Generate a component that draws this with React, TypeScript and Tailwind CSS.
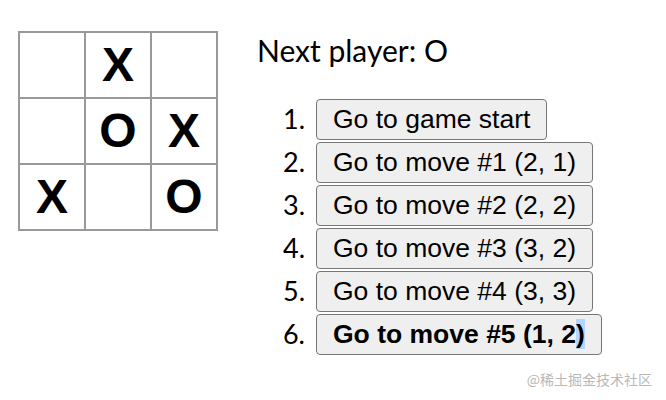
const squares = ["", "X", "", "", "O", "X", "X", "", "O"];

const moves = [
  "Go to game start",
  "Go to move #1 (2, 1)",
  "Go to move #2 (2, 2)",
  "Go to move #3 (3, 2)",
  "Go to move #4 (3, 3)",
];

export default function App() {
  return (
    <div className="relative w-[666px] h-[400px] bg-white overflow-hidden">
      <div className="flex flex-row pt-[31px] pl-[18px]">
        <div className="grid grid-cols-[64px_64px_64px] gap-[2px] p-[2px] bg-[#999] self-start">
          {squares.map((s, i) => (
            <div
              key={i}
              className="w-[64px] h-[64px] bg-white flex items-center justify-center text-[48px] leading-none font-bold text-black font-['Liberation_Sans',Arial,sans-serif]"
            >
              {s}
            </div>
          ))}
        </div>
        <div className="ml-[39px] flex flex-col">
          <div className="text-[30px] leading-[40px] text-black font-['Lato',sans-serif] -mt-[1px]">
            Next player: O
          </div>
          <ol className="mt-[29px] flex flex-col gap-[2px]">
            {moves.map((m, i) => (
              <li key={i} className="flex flex-row items-center">
                <span className="w-[59px] text-right pr-[11px] text-[27px] font-['Lato',sans-serif] text-black">
                  {i + 1}.
                </span>
                <button className="h-[41px] px-[16px] border border-[#767676] rounded-[4px] bg-[#efefef] text-[26.5px] text-black font-['Liberation_Sans',Arial,sans-serif]">
                  {m}
                </button>
              </li>
            ))}
            <li className="flex flex-row items-center">
              <span className="w-[59px] text-right pr-[11px] text-[27px] font-['Lato',sans-serif] text-black">
                6.
              </span>
              <button className="h-[41px] px-[16px] border border-[#767676] rounded-[4px] bg-[#efefef] text-[26.5px] font-bold text-black font-['Liberation_Sans',Arial,sans-serif]">
                Go to move #5 (1, 2<span className="bg-[#b4d5fe]">)</span>
              </button>
            </li>
          </ol>
        </div>
      </div>
      <div className="absolute right-[14px] top-[369px] text-[14px] text-[#b8b8b8] font-['Noto_Sans_CJK_SC',sans-serif]">
        @稀土掘金技术社区
      </div>
    </div>
  );
}
